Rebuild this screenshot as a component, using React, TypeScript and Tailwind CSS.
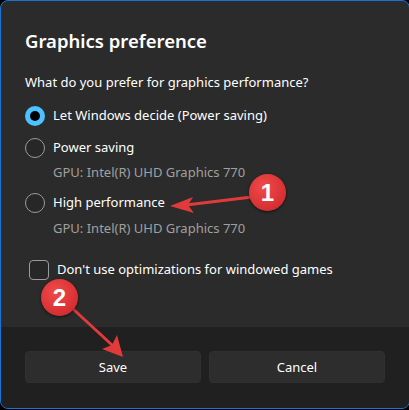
import React from 'react'

const FONT = "font-['Segoe_UI','Noto_Sans',sans-serif]"

function Radio({ checked }: { checked?: boolean }) {
  if (checked) {
    return (
      <span className="grid h-5 w-5 shrink-0 place-items-center rounded-full bg-[#4cc2ff]">
        <span className="h-[10px] w-[10px] rounded-full bg-black" />
      </span>
    )
  }
  return <span className="h-5 w-5 shrink-0 rounded-full border border-[#9b9b9b] bg-[#272727]" />
}

function Badge({ n, className }: { n: string; className: string }) {
  return (
    <div
      className={`absolute grid h-[37px] w-[37px] place-items-center rounded-full bg-[radial-gradient(circle_at_40%_35%,#f04a4a,#d52f33_70%,#b8252a)] shadow-[0_1px_3px_rgba(0,0,0,0.6)] ${className}`}
    >
      <span className="font-['Liberation_Sans',sans-serif] text-[24px] font-bold leading-none text-white">{n}</span>
    </div>
  )
}

export default function App() {
  return (
    <div className={`relative h-[410px] w-[409px] overflow-hidden bg-black ${FONT}`}>
      <div className="flex h-[409px] w-[410px] flex-col overflow-hidden rounded-lg border border-[#1a73d6] bg-[#2b2b2b] text-white">
        {/* Body */}
        <div className="flex-1 px-6 pt-6">
          <div className="flex h-8 items-center text-[18.5px] font-semibold">Graphics preference</div>
          <div className="mt-[14px] flex h-6 items-center text-[13px]">
            What do you prefer for graphics performance?
          </div>

          <div className="mt-[9px] flex h-6 items-center gap-2 text-[13px]">
            <Radio checked />
            <span>Let Windows decide (Power saving)</span>
          </div>
          <div className="mt-2 flex h-6 items-center gap-2 text-[13px]">
            <Radio />
            <span>Power saving</span>
          </div>
          <div className="mt-[3px] flex h-5 items-center pl-7 text-[13px] text-[#a0a0a0]">
            GPU: Intel(R) UHD Graphics 770
          </div>
          <div className="mt-2 flex h-6 items-center gap-2 text-[13px]">
            <Radio />
            <span>High performance</span>
          </div>
          <div className="mt-1 flex h-5 items-center pl-7 text-[13px] text-[#a0a0a0]">
            GPU: Intel(R) UHD Graphics 770
          </div>

          <div className="mt-[19px] flex h-6 items-center gap-2 pl-1 text-[13px]">
            <span className="h-5 w-5 shrink-0 rounded-[4px] border border-[#9b9b9b] bg-[#272727]" />
            <span>Don't use optimizations for windowed games</span>
          </div>
        </div>

        {/* Footer */}
        <div className="flex h-[81px] shrink-0 gap-2 bg-[#202020] px-6 pt-6">
          <button className="h-8 flex-1 rounded-[4px] border border-[#303030] bg-[#2d2d2d] pt-[2px] text-[13px] text-white">
            Save
          </button>
          <button className="h-8 flex-1 rounded-[4px] border border-[#303030] bg-[#2d2d2d] pt-[2px] text-[13px] text-white">
            Cancel
          </button>
        </div>
      </div>

      {/* Annotations */}
      <svg className="absolute inset-0" width="409" height="410" viewBox="0 0 409 410">
        <line x1="252" y1="197" x2="186" y2="205" stroke="#e03a3a" strokeWidth="3" strokeLinecap="round" />
        <polygon points="170,206 193,197 188,205 194,213" fill="#e03a3a" />
        <line x1="72" y1="308" x2="112" y2="345" stroke="#e03a3a" strokeWidth="3" strokeLinecap="round" />
        <polygon points="123,357 102,349 112,345 117,335" fill="#e03a3a" />
      </svg>
      <Badge n="1" className="left-[249px] top-[174px]" />
      <Badge n="2" className="left-[41px] top-[279px]" />
    </div>
  )
}
